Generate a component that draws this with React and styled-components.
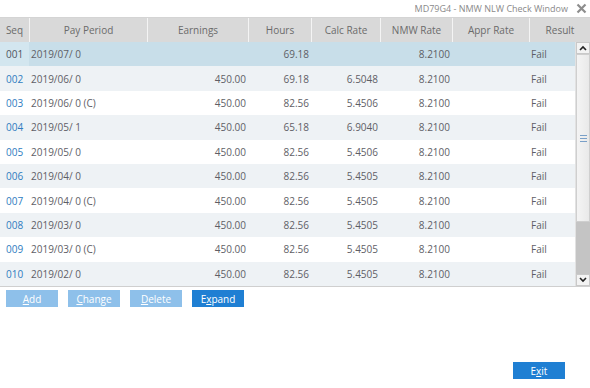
import React from 'react';
import styled, { createGlobalStyle } from 'styled-components';

const GlobalStyle = createGlobalStyle`
  html, body {
    margin: 0;
    padding: 0;
    background: #ffffff;
  }
  body {
    font-family: "Open Sans", "Noto Sans", sans-serif;
  }
`;

const COLS = '29px 118px 101px 63px 69px 72px 77px 1fr';

const Window = styled.div`
  width: 590px;
  height: 388px;
  display: flex;
  flex-direction: column;
  background: #ffffff;
`;

const TitleBar = styled.div`
  height: 17px;
  display: flex;
  align-items: center;
  justify-content: flex-end;
  gap: 8px;
  padding-right: 3px;
  color: #8a8a8a;
  font-size: 9px;
`;

const CloseIcon = styled.svg`
  width: 11px;
  height: 11px;
`;

const Grid = styled.div`
  border-top: 1px solid #d4d4d4;
  display: flex;
  flex-direction: column;
`;

const HeaderRow = styled.div`
  display: grid;
  grid-template-columns: ${COLS};
  height: 24px;
  background: #d9d9d9;
`;

const HeaderCell = styled.div`
  display: flex;
  align-items: center;
  justify-content: center;
  color: #6b6b6b;
  font-size: 10px;
  border-left: ${p => (p.$first ? 'none' : '1px solid #f4f4f4')};
`;

const BodyWrap = styled.div`
  display: flex;
  height: 244px;
  border-bottom: 1px solid #cfcfcf;
`;

const Rows = styled.div`
  flex: 1;
  display: flex;
  flex-direction: column;
`;

const Row = styled.div`
  display: grid;
  grid-template-columns: ${COLS};
  height: 24.4px;
  background: ${p => (p.$selected ? '#c8dee9' : p.$alt ? '#eef2f5' : '#ffffff')};
`;

const Cell = styled.div`
  display: flex;
  align-items: center;
  justify-content: ${p => (p.$right ? 'flex-end' : 'flex-start')};
  padding: 0 2px 0 ${p => (p.$right ? '0' : '2px')};
  font-size: 10px;
  color: #5e5e66;
  white-space: nowrap;
`;

const SeqCell = styled(Cell)`
  color: ${p => (p.$selected ? '#4f5560' : '#2f7cc0')};
  padding-left: 6px;
  background: ${p => (p.$selected ? '#d3e6ef' : 'transparent')};
`;

const Scrollbar = styled.div`
  width: 14px;
  display: flex;
  flex-direction: column;
  background: #c4c4c4;
  border-left: 1px solid #e2e2e2;
`;

const ArrowBox = styled.div`
  height: 12px;
  display: flex;
  align-items: center;
  justify-content: center;
  background: #f3f3f3;
  border: 1px solid #c9c9c9;
  box-sizing: border-box;
`;

const Thumb = styled.div`
  height: 168px;
  background: linear-gradient(to right, #f4f4f4, #e9e9e9);
  border: 1px solid #cfcfcf;
  box-sizing: border-box;
  display: flex;
  align-items: center;
  justify-content: center;
`;

const Grip = styled.div`
  width: 7px;
  height: 5px;
  border-top: 1px solid #7aa0c8;
  border-bottom: 1px solid #7aa0c8;
  position: relative;
  &::after {
    content: '';
    position: absolute;
    left: 0;
    right: 0;
    top: 2px;
    border-top: 1px solid #7aa0c8;
  }
`;

const Track = styled.div`
  flex: 1;
`;

const ButtonRow = styled.div`
  display: flex;
  gap: 10px;
  padding: 3px 0 0 6px;
`;

const Button = styled.button`
  width: 52px;
  height: 17px;
  padding: 0;
  border: none;
  font-family: "Open Sans", "Noto Sans", sans-serif;
  font-size: 10px;
  color: #ffffff;
  background: ${p => (p.$active ? '#1f7fd3' : '#8ec0ea')};
  cursor: pointer;
  u {
    text-decoration: underline;
  }
`;

const Footer = styled.div`
  margin-top: auto;
  display: flex;
  justify-content: flex-end;
  padding: 0 25px 9px 0;
`;

const rows = [
  ['001', '2019/07/ 0', '', '69.18', '', '8.2100', 'Fail'],
  ['002', '2019/06/ 0', '450.00', '69.18', '6.5048', '8.2100', 'Fail'],
  ['003', '2019/06/ 0 (C)', '450.00', '82.56', '5.4506', '8.2100', 'Fail'],
  ['004', '2019/05/ 1', '450.00', '65.18', '6.9040', '8.2100', 'Fail'],
  ['005', '2019/05/ 0', '450.00', '82.56', '5.4506', '8.2100', 'Fail'],
  ['006', '2019/04/ 0', '450.00', '82.56', '5.4505', '8.2100', 'Fail'],
  ['007', '2019/04/ 0 (C)', '450.00', '82.56', '5.4505', '8.2100', 'Fail'],
  ['008', '2019/03/ 0', '450.00', '82.56', '5.4505', '8.2100', 'Fail'],
  ['009', '2019/03/ 0 (C)', '450.00', '82.56', '5.4505', '8.2100', 'Fail'],
  ['010', '2019/02/ 0', '450.00', '82.56', '5.4505', '8.2100', 'Fail'],
];

const headers = ['Seq', 'Pay Period', 'Earnings', 'Hours', 'Calc Rate', 'NMW Rate', 'Appr Rate', 'Result'];

const Chevron = ({ up }) => (
  <svg width="8" height="6" viewBox="0 0 8 6">
    <path d={up ? 'M1 5 L4 2 L7 5' : 'M1 1 L4 4 L7 1'} stroke="#222" strokeWidth="1.6" fill="none" />
  </svg>
);

export default function App() {
  return (
    <Window>
      <GlobalStyle />
      <TitleBar>
        <span>MD79G4 - NMW NLW Check Window</span>
        <CloseIcon viewBox="0 0 11 11">
          <path d="M1.5 1.5 L9.5 9.5 M9.5 1.5 L1.5 9.5" stroke="#8d8d8d" strokeWidth="2.2" />
        </CloseIcon>
      </TitleBar>
      <Grid>
        <HeaderRow>
          {headers.map((h, i) => (
            <HeaderCell key={h} $first={i === 0}>{h}</HeaderCell>
          ))}
        </HeaderRow>
        <BodyWrap>
          <Rows>
            {rows.map((r, i) => (
              <Row key={r[0]} $selected={i === 0} $alt={i % 2 === 1}>
                <SeqCell $selected={i === 0}>{r[0]}</SeqCell>
                <Cell>{r[1]}</Cell>
                <Cell $right>{r[2]}</Cell>
                <Cell $right>{r[3]}</Cell>
                <Cell $right>{r[4]}</Cell>
                <Cell $right>{r[5]}</Cell>
                <Cell />
                <Cell>{r[6]}</Cell>
              </Row>
            ))}
          </Rows>
          <Scrollbar>
            <ArrowBox><Chevron up /></ArrowBox>
            <Thumb><Grip /></Thumb>
            <Track />
            <ArrowBox><Chevron /></ArrowBox>
          </Scrollbar>
        </BodyWrap>
      </Grid>
      <ButtonRow>
        <Button><u>A</u>dd</Button>
        <Button><u>C</u>hange</Button>
        <Button><u>D</u>elete</Button>
        <Button $active>E<u>x</u>pand</Button>
      </ButtonRow>
      <Footer>
        <Button $active>E<u>x</u>it</Button>
      </Footer>
    </Window>
  );
}
